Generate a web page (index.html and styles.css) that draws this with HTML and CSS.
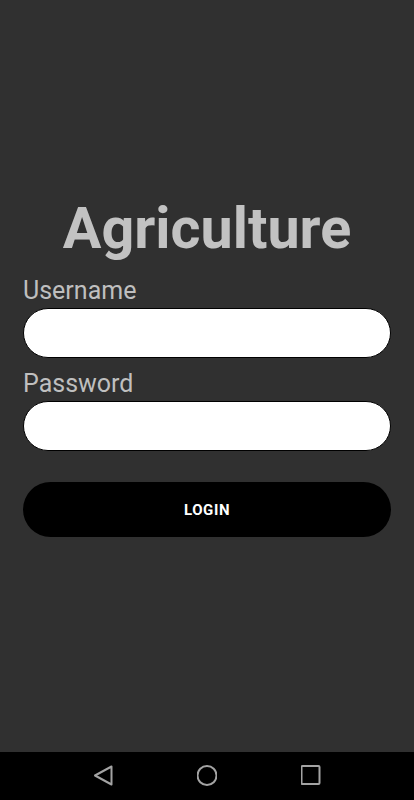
FILE: index.html
```html
<!DOCTYPE html>
<html lang="en">
<head>
	<meta charset="UTF-8">
	<title>Agriculture</title>
	<link rel="stylesheet" href="styles.css">
</head>
<body>
	<div class="screen">
		<div class="login">
			<h1 class="title">Agriculture</h1>
			<label class="label" for="user">Username</label>
			<input class="field" id="user" type="text">
			<label class="label" for="pass">Password</label>
			<input class="field" id="pass" type="password">
			<button class="btn">LOGIN</button>
		</div>
	</div>
	<div class="navbar">
		<svg class="nav-icon" width="20" height="22" viewBox="0 0 20 22">
			<path d="M18.5 1.5 L2 10.5 L18.5 19.5 Z" fill="none" stroke="#a3a3a3" stroke-width="2" stroke-linejoin="round"/>
		</svg>
		<svg class="nav-icon" width="20" height="22" viewBox="0 0 20 22">
			<circle cx="10" cy="10.5" r="9.5" fill="none" stroke="#a3a3a3" stroke-width="2"/>
		</svg>
		<svg class="nav-icon" width="20" height="22" viewBox="0 0 20 22">
			<rect x="0.5" y="1" width="18" height="18" rx="1" fill="none" stroke="#a3a3a3" stroke-width="2"/>
		</svg>
	</div>
</body>
</html>
```

FILE: styles.css
```css
*{margin:0;padding:0;box-sizing:border-box;}
body{
	width: 414px;
	height: 800px;
	background-color: #303030;
	font-family: Roboto, "Noto Sans", sans-serif;
	overflow: hidden;
}
.screen{
	height: 752px;
	padding-top: 195px;
}
.login{
	display: flex;
	flex-direction: column;
	padding: 0 23px;
}
.title{
	font-size: 57.5px;
	line-height: 68px;
	font-weight: 700;
	color: #c2c2c2;
	text-align: center;
	margin-bottom: 14px;
}
.label{
	font-size: 25px;
	line-height: 28px;
	color: #bfbfbf;
	margin-bottom: 3px;
}
.field{
	height: 50px;
	width: 100%;
	border: 1.5px solid #000;
	border-radius: 25px;
	background-color: #fff;
	outline: none;
	padding: 0 20px;
	font-size: 18px;
	font-family: Roboto, sans-serif;
	margin-bottom: 12px;
}
#pass{
	margin-bottom: 31px;
}
.btn{
	height: 55px;
	width: 100%;
	border: 0;
	border-radius: 28px;
	background-color: #000;
	color: #fff;
	font-family: Roboto, sans-serif;
	font-size: 15px;
	font-weight: 700;
	letter-spacing: 0.6px;
	cursor: pointer;
}
.navbar{
	height: 48px;
	background-color: #000;
	display: flex;
	align-items: center;
	justify-content: center;
	gap: 84px;
}
.nav-icon{
	display: block;
}
```
